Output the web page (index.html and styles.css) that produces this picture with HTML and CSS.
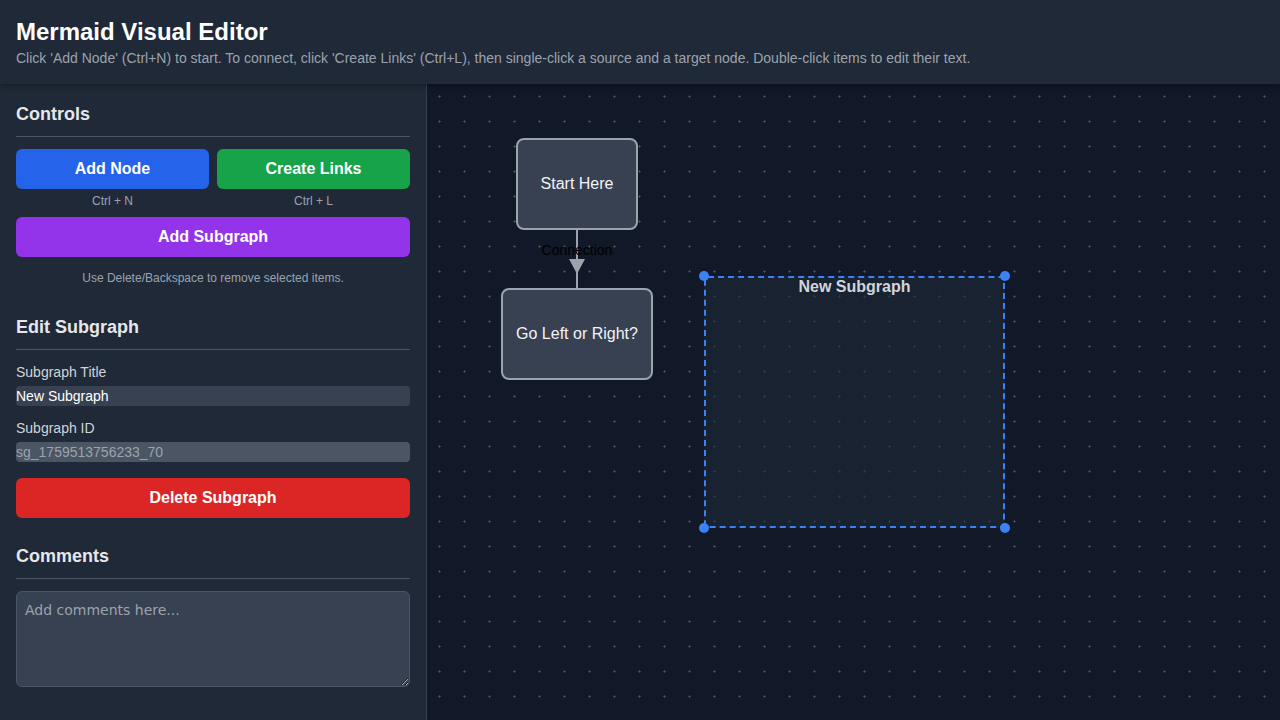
FILE: index.html
```html
<!DOCTYPE html>
<html>
<head>
<meta charset="utf-8">
<link rel="stylesheet" href="styles.css">
</head>
<body>
<header class="header">
  <h1 class="title">Mermaid Visual Editor</h1>
  <p class="subtitle">Click 'Add Node' (Ctrl+N) to start. To connect, click 'Create Links' (Ctrl+L), then single-click a source and a target node. Double-click items to edit their text.</p>
</header>
<main class="main">
  <aside class="sidebar">
    <section class="section">
      <h2 class="section-title">Controls</h2>
      <div class="btn-row">
        <div class="btn-col">
          <button class="btn btn-blue">Add Node</button>
          <span class="shortcut">Ctrl + N</span>
        </div>
        <div class="btn-col">
          <button class="btn btn-green">Create Links</button>
          <span class="shortcut">Ctrl + L</span>
        </div>
      </div>
      <button class="btn btn-purple">Add Subgraph</button>
      <p class="hint">Use Delete/Backspace to remove selected items.</p>
    </section>
    <section class="section">
      <h2 class="section-title">Edit Subgraph</h2>
      <label class="field-label">Subgraph Title</label>
      <input class="field" type="text" value="New Subgraph">
      <label class="field-label">Subgraph ID</label>
      <input class="field field-disabled" type="text" value="sg_1759513756233_70" disabled>
      <button class="btn btn-red">Delete Subgraph</button>
    </section>
    <section class="section">
      <h2 class="section-title">Comments</h2>
      <textarea class="comments" placeholder="Add comments here..."></textarea>
    </section>
  </aside>
  <div class="canvas">
    <svg class="edges" width="853" height="636">
      <line x1="150" y1="145" x2="150" y2="204" stroke="#9ca3af" stroke-width="2"/>
      <polygon points="142,175 158,175 150,190" fill="#9ca3af"/>
      <text x="150" y="171" text-anchor="middle" class="edge-label">Connection</text>
    </svg>
    <div class="subgraph">
      <div class="subgraph-title">New Subgraph</div>
      <span class="handle h-tl"></span>
      <span class="handle h-tr"></span>
      <span class="handle h-bl"></span>
      <span class="handle h-br"></span>
    </div>
    <div class="node node-start">Start Here</div>
    <div class="node node-go">Go Left or Right?</div>
  </div>
</main>
</body>
</html>
```

FILE: styles.css
```css
* { box-sizing: border-box; }
html, body { margin: 0; padding: 0; height: 100%; }
body {
  font-family: "Liberation Sans", Arial, sans-serif;
  background: #111827;
  color: #f3f4f6;
  display: flex;
  flex-direction: column;
  height: 720px;
  overflow: hidden;
}
.header {
  background: #1f2937;
  height: 84px;
  padding: 17px 16px 0;
  box-shadow: 0 2px 6px rgba(0,0,0,0.3);
  position: relative;
  z-index: 2;
}
.title {
  margin: 0;
  font-size: 24px;
  line-height: 30px;
  font-weight: 700;
  color: #ffffff;
}
.subtitle {
  margin: 3px 0 0;
  font-size: 14px;
  line-height: 16px;
  color: #9ca3af;
}
.main {
  flex: 1;
  display: flex;
  min-height: 0;
}
.sidebar {
  width: 427px;
  flex: none;
  background: #1f2937;
  border-right: 1px solid #374151;
  padding: 16px 16px 0;
  display: flex;
  flex-direction: column;
}
.section { display: flex; flex-direction: column; margin-bottom: 24px; }
.section-title {
  margin: 0;
  font-size: 18px;
  line-height: 28px;
  font-weight: 700;
  color: #e5e7eb;
  padding-bottom: 8px;
  border-bottom: 1px solid #4b5563;
  margin-bottom: 12px;
}
.btn-row { display: flex; gap: 8px; }
.btn-col { flex: 1; display: flex; flex-direction: column; align-items: center; }
.btn {
  width: 100%;
  height: 40px;
  border: 0;
  border-radius: 6px;
  color: #ffffff;
  font-family: "Liberation Sans", Arial, sans-serif;
  font-size: 16px;
  font-weight: 700;
  cursor: pointer;
}
.btn-blue { background: #2563eb; }
.btn-green { background: #16a34a; }
.btn-purple { background: #9333ea; margin-top: 8px; }
.btn-red { background: #dc2626; margin-top: 16px; }
.shortcut {
  font-size: 12px;
  line-height: 16px;
  color: #9ca3af;
  margin-top: 4px;
}
.hint {
  margin: 13px 0 3px;
  text-align: center;
  font-size: 12px;
  line-height: 16px;
  color: #9ca3af;
}
.field-label {
  font-size: 14px;
  line-height: 20px;
  color: #d1d5db;
  margin-bottom: 4px;
}
.field {
  width: 100%;
  height: 20px;
  border: 0;
  border-radius: 4px;
  background: #374151;
  color: #ffffff;
  font-family: "Liberation Sans", Arial, sans-serif;
  font-size: 14px;
  padding: 0;
  margin-bottom: 12px;
}
.field-disabled {
  background: #4b5563;
  color: #9ca3af;
  margin-bottom: 0;
}
.comments {
  width: 100%;
  height: 96px;
  background: #374151;
  border: 1px solid #4b5563;
  border-radius: 6px;
  padding: 8px;
  color: #f3f4f6;
  font-family: "DejaVu Sans", sans-serif;
  font-size: 14px;
  line-height: 20px;
  resize: vertical;
}
.comments::placeholder { color: #9ca3af; }
.canvas {
  flex: 1;
  position: relative;
  background-color: #111827;
  background-image: radial-gradient(circle at center, #4b5563 0.9px, transparent 1.2px);
  background-size: 25px 25px;
  overflow: hidden;
}
.edges { position: absolute; left: 0; top: 0; z-index: 1; }
.edge-label {
  font-family: "Liberation Sans", Arial, sans-serif;
  font-size: 14px;
  fill: #000000;
}
.node {
  position: absolute;
  display: flex;
  align-items: center;
  justify-content: center;
  background: #374151;
  border: 2px solid #9ca3af;
  border-radius: 8px;
  color: #f3f4f6;
  font-size: 16px;
  z-index: 2;
}
.node-start { left: 89px; top: 54px; width: 122px; height: 92px; }
.node-go { left: 74px; top: 204px; width: 152px; height: 92px; }
.subgraph {
  position: absolute;
  left: 277px;
  top: 192px;
  width: 301px;
  height: 252px;
  border: 2px dashed #3b82f6;
  border-radius: 4px;
  background: rgba(31, 41, 55, 0.6);
  z-index: 1;
}
.subgraph-title {
  text-align: center;
  font-size: 16px;
  font-weight: 700;
  color: #d1d5db;
  margin-top: 0;
  line-height: 18px;
}
.handle {
  position: absolute;
  width: 10px;
  height: 10px;
  border-radius: 50%;
  background: #3b82f6;
}
.h-tl { left: -7px; top: -7px; }
.h-tr { right: -7px; top: -7px; }
.h-bl { left: -7px; bottom: -7px; }
.h-br { right: -7px; bottom: -7px; }
```
